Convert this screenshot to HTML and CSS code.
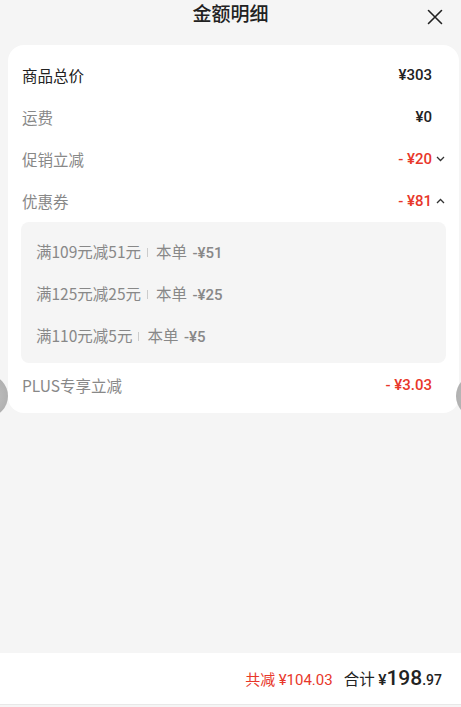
FILE: index.html
```html
<!DOCTYPE html>
<html lang="zh-CN">
  <head>
    <meta charset="UTF-8" />
    <meta name="viewport" content="width=device-width, initial-scale=1.0" />
    <title>金额明细</title>
    <link rel="stylesheet" href="styles.css">
  </head>
  <body>
    <div class="page">
      <div class="header">
        <h1>金额明细</h1>
        <span class="close">
          <svg width="16" height="16" viewBox="0 0 16 16">
            <path d="M1.5 1.5 L14.5 14.5 M14.5 1.5 L1.5 14.5" stroke="#222" stroke-width="1.6" stroke-linecap="round" fill="none" />
          </svg>
        </span>
      </div>

      <div class="card">
        <div class="row">
          <span class="label strong">商品总价</span>
          <span class="value">¥303<i class="slot"></i></span>
        </div>
        <div class="row">
          <span class="label">运费</span>
          <span class="value">¥0<i class="slot"></i></span>
        </div>
        <div class="row">
          <span class="label">促销立减</span>
          <span class="value red">- ¥20<i class="slot">
            <svg width="9" height="6" viewBox="0 0 9 6"><path d="M1 1 L4.5 4.5 L8 1" stroke="#333" stroke-width="1.3" fill="none" /></svg>
          </i></span>
        </div>
        <div class="row">
          <span class="label">优惠券</span>
          <span class="value red">- ¥81<i class="slot">
            <svg width="9" height="6" viewBox="0 0 9 6"><path d="M1 5 L4.5 1.5 L8 5" stroke="#333" stroke-width="1.3" fill="none" /></svg>
          </i></span>
        </div>

        <div class="coupons">
          <div class="coupon"><span>满109元减51元<i class="sep"></i>本单 <b>-¥51</b></span></div>
          <div class="coupon"><span>满125元减25元<i class="sep"></i>本单 <b>-¥25</b></span></div>
          <div class="coupon"><span>满110元减5元<i class="sep"></i>本单 <b>-¥5</b></span></div>
        </div>

        <div class="row plus">
          <span class="label">PLUS专享立减</span>
          <span class="value red">- ¥3.03<i class="slot"></i></span>
        </div>
      </div>

      <div class="spacer"></div>

      <div class="footer">
        <span class="saved">共减 <em>¥104.03</em></span>
        <span class="total">合计 <em>¥</em><b>198</b><small>.97</small></span>
      </div>

      <div class="edge edge-left"></div>
      <div class="edge edge-right"></div>
    </div>
  </body>
</html>
```

FILE: styles.css
```css
html,
body {
  margin: 0;
  padding: 0;
  height: 100%;
}
body {
  font-family: "Noto Sans CJK SC", "Noto Sans", sans-serif;
  background-color: #f5f5f5;
  color: #222;
  overflow: hidden;
}
.page {
  position: relative;
  display: flex;
  flex-direction: column;
  height: 707px;
  overflow: hidden;
}
.header {
  position: relative;
  height: 45px;
}
.header h1 {
  margin: 0;
  text-align: center;
  font-size: 19px;
  font-weight: 500;
  line-height: 26px;
  color: #222;
}
.close {
  position: absolute;
  right: 18px;
  top: 9px;
  display: flex;
}
.card {
  margin: 0 2px 0 8px;
  padding: 9px 14px 7px;
  background-color: #fff;
  border-radius: 16px;
}
.row {
  display: flex;
  justify-content: space-between;
  align-items: center;
  height: 42px;
  font-size: 15.5px;
}
.label {
  color: #888;
}
.label.strong {
  color: #222;
}
.value {
  display: flex;
  align-items: center;
  font-family: Roboto, "Noto Sans", sans-serif;
  font-weight: 500;
  font-size: 15px;
  color: #222;
}
.value.red {
  color: #e8372a;
}
.slot {
  display: flex;
  justify-content: flex-end;
  align-items: center;
  width: 13px;
}
.coupons {
  margin: 0 -1px 0 -1px;
  padding: 8px 15px 7px;
  background-color: #f5f5f5;
  border-radius: 8px;
}
.coupon {
  display: flex;
  align-items: center;
  height: 42px;
  font-size: 15.5px;
  color: #888;
}
.coupon b {
  font-family: Roboto, "Noto Sans", sans-serif;
  font-weight: 500;
  font-size: 15px;
  margin-left: 2px;
}
.sep {
  display: inline-block;
  width: 1px;
  height: 9px;
  margin: 0 8px 0 6px;
  vertical-align: 1px;
  background-color: #ccc;
}
.plus {
  margin-top: 1px;
}
.spacer {
  flex: 1;
}
.footer {
  display: flex;
  justify-content: flex-end;
  align-items: baseline;
  gap: 11px;
  height: 51px;
  line-height: 51px;
  margin-bottom: 2px;
  padding-right: 19px;
  background-color: #fff;
  border-bottom: 1px solid #e8e8e8;
}
.footer em {
  font-style: normal;
  font-family: Roboto, "Noto Sans", sans-serif;
  font-weight: 500;
}
.saved {
  font-size: 15px;
  color: #e8372a;
}
.saved em {
  font-weight: 400;
}
.total {
  font-size: 15.5px;
  color: #222;
}
.total b {
  font-family: Roboto, "Noto Sans", sans-serif;
  font-size: 21px;
  font-weight: 500;
}
.total small {
  font-family: Roboto, "Noto Sans", sans-serif;
  font-size: 14px;
  font-weight: 500;
}
.edge {
  position: absolute;
  top: 375px;
  width: 40px;
  height: 42px;
  border-radius: 50%;
  background: radial-gradient(circle at center, #c4c4c4, #a8a8a8);
}
.edge-left {
  left: -32px;
}
.edge-right {
  right: -35px;
}
```
